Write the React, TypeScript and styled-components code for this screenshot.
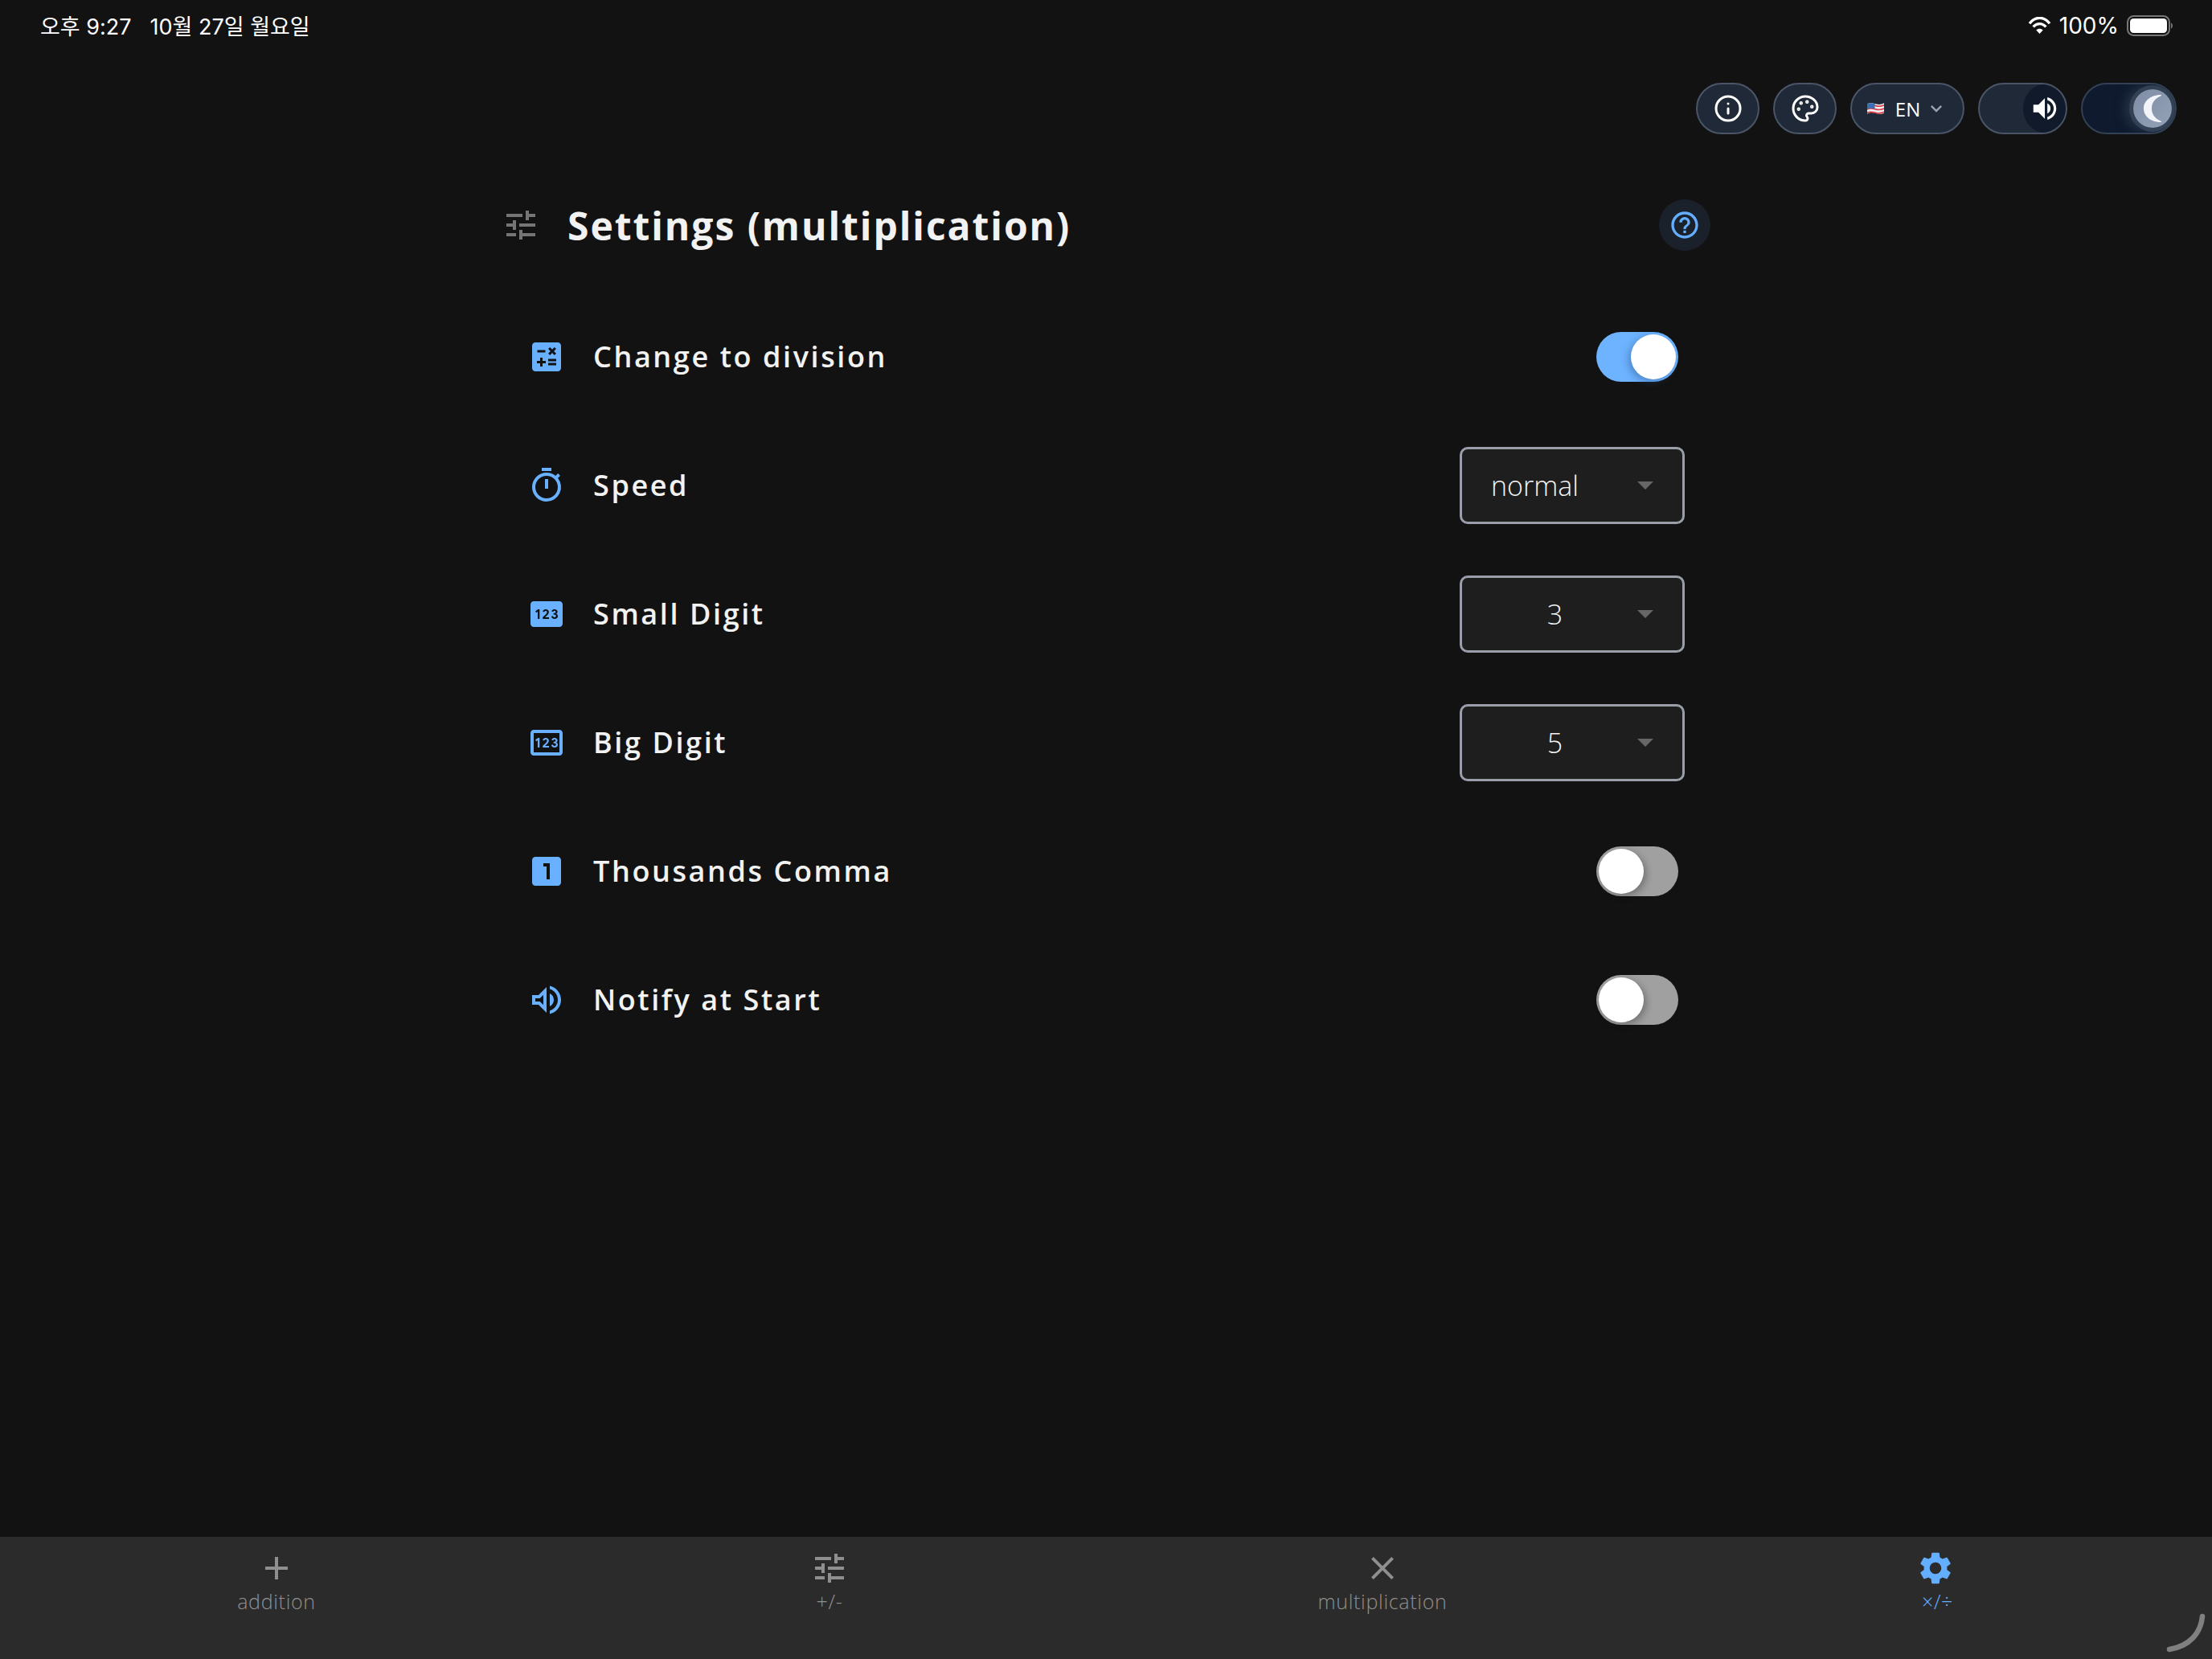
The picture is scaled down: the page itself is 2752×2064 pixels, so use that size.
import React from "react";
import styled, { createGlobalStyle } from "styled-components";
import { Info, Palette } from "lucide-react";
import {
  MdAdd,
  MdCalculate,
  MdClose,
  MdExpandMore,
  MdHelpOutline,
  MdLooksOne,
  MdOutlinePin,
  MdOutlineTimer,
  MdOutlineVolumeUp,
  MdPin,
  MdSettings,
  MdTune,
  MdVolumeUp,
} from "react-icons/md";

const GlobalStyle = createGlobalStyle`
  html, body {
    margin: 0;
    background: #121212;
  }
`;

const Page = styled.div`
  position: relative;
  display: flex;
  flex-direction: column;
  width: 2752px;
  height: 2064px;
  overflow: hidden;
  background: #121212;
  color: #f2f2f2;
  font-family: "Open Sans", "Noto Sans CJK KR", sans-serif;
`;

const StatusBar = styled.div`
  display: flex;
  align-items: center;
  justify-content: space-between;
  height: 64px;
  padding: 0 49px 0 50px;
  font-family: Inter, "Noto Sans CJK KR", sans-serif;
  font-size: 28px;
  color: #ffffff;
`;

const StatusGroup = styled.div`
  display: flex;
  align-items: center;
  gap: 23px;
  padding-bottom: 2px;
  font-size: 27px;
`;

const StatusRight = styled.div`
  display: flex;
  align-items: center;
  gap: 10px;
`;

const Toolbar = styled.div`
  display: flex;
  justify-content: flex-end;
  gap: 17px;
  height: 64px;
  margin-top: 39px;
  padding-right: 44px;
`;

const RoundButton = styled.button`
  display: flex;
  align-items: center;
  justify-content: center;
  box-sizing: border-box;
  width: 79px;
  height: 64px;
  padding: 0;
  border: 2.5px solid #4a5568;
  border-radius: 32px;
  background: #1f2937;
  color: #ffffff;
`;

const LangButton = styled(RoundButton)`
  width: 142px;
  gap: 14px;
  font-family: "Open Sans", sans-serif;
  font-size: 24px;
  font-weight: 400;
`;

const ChevronWrap = styled.span`
  display: flex;
  margin-left: -8px;
  color: #9ca3af;
`;

const ToggleTrack = styled(RoundButton)<{ $width: number; $dark?: boolean }>`
  justify-content: flex-end;
  width: ${(p) => p.$width}px;
  overflow: hidden;
  background: ${(p) => (p.$dark ? "#0f1a2e" : "#1f2937")};
  border-color: ${(p) => (p.$dark ? "#334155" : "#4a5568")};
`;

const SoundKnob = styled.span`
  display: flex;
  align-items: center;
  justify-content: center;
  width: 53px;
  height: 100%;
  border-radius: 50%;
  background: #111a2b;
`;

const ThemeKnob = styled.span`
  display: flex;
  align-items: center;
  justify-content: center;
  width: 48px;
  height: 48px;
  margin-right: 4px;
  border-radius: 50%;
  background: linear-gradient(135deg, #7f8ca5, #94a3b8);
  box-shadow: 0 0 0 5px #334155, -6px 0 14px 4px rgba(51, 65, 85, 0.7);
`;

const Main = styled.main`
  flex: 1;
  width: 1512px;
  margin: 0 auto;
  padding-top: 81px;
`;

const Header = styled.div`
  display: flex;
  align-items: center;
  gap: 34px;
  height: 64px;
  padding: 0 4px;
  margin-bottom: 52px;
  color: #757575;
`;

const Title = styled.h1`
  flex: 1;
  margin: 0;
  font-size: 48px;
  font-weight: 700;
  letter-spacing: 1.95px;
  color: #f2f2f2;
`;

const HelpButton = styled.button`
  display: flex;
  align-items: center;
  justify-content: center;
  width: 64px;
  height: 64px;
  padding: 0;
  border: none;
  border-radius: 50%;
  background: #1a212b;
  color: #64aeff;
`;

const Row = styled.div`
  display: flex;
  align-items: center;
  gap: 34px;
  height: 160px;
  padding-left: 36px;
`;

const RowIcon = styled.span`
  display: flex;
  color: #69b1ff;
`;

const RowLabel = styled.span`
  flex: 1;
  padding-bottom: 2px;
  font-size: 36px;
  font-weight: 600;
  letter-spacing: 2.6px;
  color: #f2f2f2;
`;

const SwitchTrack = styled.span<{ $on?: boolean }>`
  display: flex;
  justify-content: ${(p) => (p.$on ? "flex-end" : "flex-start")};
  align-items: center;
  box-sizing: border-box;
  width: 102px;
  height: 62px;
  margin-right: 44px;
  padding: 3px;
  border-radius: 31px;
  background: ${(p) => (p.$on ? "#6db3ff" : "#a0a0a0")};
`;

const SwitchThumb = styled.span<{ $on?: boolean }>`
  width: 56px;
  height: 56px;
  border-radius: 50%;
  background: #ffffff;
  box-shadow: ${(p) => (p.$on ? "-3px 3px 10px rgba(40, 80, 130, 0.45)" : "3px 3px 10px rgba(0, 0, 0, 0.3)")};
`;

const SelectBox = styled.div`
  display: flex;
  align-items: center;
  box-sizing: border-box;
  width: 280px;
  height: 96px;
  margin-right: 36px;
  padding: 0 36px 0 36px;
  border: 3px solid #9a9ea8;
  border-radius: 10px;
  background: #1e1e1e;
`;

const SelectValue = styled.span<{ $centered?: boolean }>`
  flex: 1;
  padding-right: ${(p) => (p.$centered ? "23px" : "0")};
  font-size: 34px;
  font-weight: 300;
  text-align: ${(p) => (p.$centered ? "center" : "left")};
  color: #f2f2f2;
`;

const SelectArrow = styled.span`
  width: 0;
  height: 0;
  border-top: 10px solid #666666;
  border-left: 10px solid transparent;
  border-right: 10px solid transparent;
`;

const TabBar = styled.nav`
  position: relative;
  display: grid;
  grid-template-columns: repeat(4, 1fr);
  height: 152px;
  background: #2b2b2b;
`;

const Tab = styled.div<{ $active?: boolean }>`
  display: flex;
  flex-direction: column;
  align-items: center;
  padding-top: 15px;
  color: ${(p) => (p.$active ? "#64aeff" : "#8f8f8f")};
`;

const TabLabel = styled.span<{ $shift?: boolean }>`
  padding-left: ${(p) => (p.$shift ? "5px" : "0")};
  font-size: 25px;
  font-weight: 300;
  line-height: 34px;
  letter-spacing: 0.7px;
`;

const HomeCorner = styled.svg`
  position: absolute;
  right: 6px;
  bottom: 6px;
`;

const settings = [
  { icon: <MdCalculate size={48} />, label: "Change to division", toggle: true },
  { icon: <MdOutlineTimer size={48} />, label: "Speed", select: "normal" },
  { icon: <MdPin size={48} />, label: "Small Digit", select: "3", centered: true },
  { icon: <MdOutlinePin size={48} />, label: "Big Digit", select: "5", centered: true },
  { icon: <MdLooksOne size={48} />, label: "Thousands Comma", toggle: false },
  { icon: <MdOutlineVolumeUp size={48} />, label: "Notify at Start", toggle: false },
];

const tabs = [
  { icon: <MdAdd size={48} />, label: "addition" },
  { icon: <MdTune size={48} />, label: "+/-" },
  { icon: <MdClose size={48} />, label: "multiplication" },
  { icon: <MdSettings size={48} />, label: "×/÷", active: true },
];

const WifiIcon = () => (
  <svg width="29" height="22" viewBox="0 0 29 22" fill="none" stroke="#fff" strokeWidth="3.4">
    <path d="M2 8.2C9-.9 20-.9 27 8.2" />
    <path d="M6.6 12.4c4.6-5 11.2-5 15.8 0" />
    <path d="M14.5 21l-4.2-4.6c2.400-2.300 6-2.300 8.400 0z" fill="#fff" stroke="none" />
  </svg>
);

const BatteryIcon = () => (
  <svg width="57" height="26" viewBox="0 0 57 26">
    <rect x="1" y="1" width="52" height="24" rx="7.5" fill="none" stroke="#777" strokeWidth="2" />
    <rect x="4" y="4" width="46" height="18" rx="4.5" fill="#fff" />
    <path d="M55 9.500c1.500.6 2 2 2 3.500s-.5 2.900-2 3.500z" fill="#777" />
  </svg>
);

const FlagIcon = () => (
  <svg width="21" height="16" viewBox="0 0 22 16">
    <path d="M0 2c4-2 7-1 11 0s7 1 11-1v13c-4 2-7 1-11 0s-7-1-11 1z" fill="#f1f1f1" />
    <path
      d="M0 4.500c4-2 7-1 11 0s7 1 11-1M0 9c4-2 7-1 11 0s7 1 11-1M0 13.500c4-2 7-1 11 0s7 1 11-1"
      fill="none"
      stroke="#dc3b48"
      strokeWidth="1.800"
    />
    <path d="M0 2c3-1.500 6-1.200 10-.3v6.800c-4-.9-7-1.200-10 .3z" fill="#3b6fb5" />
  </svg>
);

const MoonIcon = () => (
  <svg width="26" height="36" viewBox="0 0 26 36">
    <path d="M23 1C13 1 2 7 2 18s11 17 21 17c1.500 0 1.500-1 0-1.600C15 30 12 24 12 18S15 6 23 2.600c1.500-.6 1.500-1.600 0-1.600z" fill="#f1f5f9" />
  </svg>
);

export default function App() {
  return (
    <Page>
      <GlobalStyle />
      <StatusBar>
        <StatusGroup>
          <span>오후 9:27</span>
          <span>10월 27일 월요일</span>
        </StatusGroup>
        <StatusRight>
          <WifiIcon />
          <span>100%</span>
          <BatteryIcon />
        </StatusRight>
      </StatusBar>

      <Toolbar>
        <RoundButton>
          <Info size={36} strokeWidth={2} />
        </RoundButton>
        <RoundButton>
          <Palette size={36} strokeWidth={2} />
        </RoundButton>
        <LangButton>
          <FlagIcon />
          EN
          <ChevronWrap>
            <MdExpandMore size={28} />
          </ChevronWrap>
        </LangButton>
        <ToggleTrack $width={111}>
          <SoundKnob>
            <MdVolumeUp size={38} />
          </SoundKnob>
        </ToggleTrack>
        <ToggleTrack $width={119} $dark>
          <ThemeKnob>
            <MoonIcon />
          </ThemeKnob>
        </ToggleTrack>
      </Toolbar>

      <Main>
        <Header>
          <MdTune size={48} />
          <Title>Settings (multiplication)</Title>
          <HelpButton>
            <MdHelpOutline size={40} />
          </HelpButton>
        </Header>
        {settings.map((item) => (
          <Row key={item.label}>
            <RowIcon>{item.icon}</RowIcon>
            <RowLabel>{item.label}</RowLabel>
            {item.select ? (
              <SelectBox>
                <SelectValue $centered={item.centered}>{item.select}</SelectValue>
                <SelectArrow />
              </SelectBox>
            ) : (
              <SwitchTrack $on={item.toggle}>
                <SwitchThumb $on={item.toggle} />
              </SwitchTrack>
            )}
          </Row>
        ))}
      </Main>

      <TabBar>
        {tabs.map((tab) => (
          <Tab key={tab.label} $active={tab.active}>
            {tab.icon}
            <TabLabel $shift={tab.active}>{tab.label}</TabLabel>
          </Tab>
        ))}
        <HomeCorner width="52" height="52" viewBox="0 0 52 52" fill="none">
          <path d="M46 5C44 26 30 42 5 46" stroke="#808080" strokeWidth="6.500" strokeLinecap="round" />
        </HomeCorner>
      </TabBar>
    </Page>
  );
}
